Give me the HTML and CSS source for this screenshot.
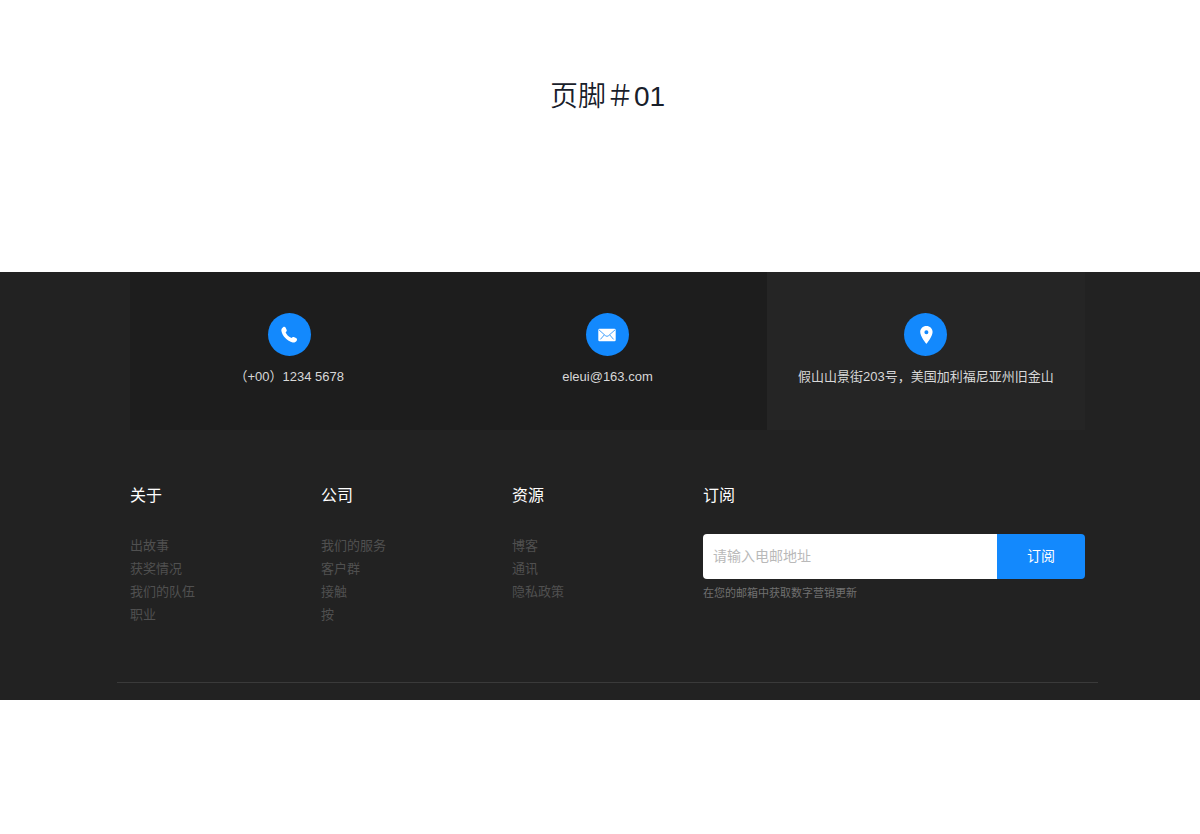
FILE: index.html
```html
<!DOCTYPE html>
<html lang="zh-CN">
<head>
<meta charset="utf-8">
<meta name="viewport" content="width=device-width, initial-scale=1">
<title>页脚＃01</title>
<link rel="stylesheet" href="styles.css">
</head>
<body>
<header class="page-header">
  <h1 class="page-title">页脚＃01</h1>
</header>
<footer class="footer">
  <div class="container">
    <div class="contacts">
      <div class="contact">
        <span class="contact-icon">
          <svg viewBox="0 0 18 18" width="18" height="18" aria-hidden="true"><path fill="#fff" d="M3.1 1.2C4.1.5 5.3.9 5.8 1.9L6.7 4C7 5 6.5 5.6 5.6 6.2C6.5 8.6 8.8 10.9 11.6 12.1C12.2 11.2 12.9 10.8 13.8 11.1L16 12.1C17 12.6 17.4 13.7 16.7 14.7C15.8 16 14.3 16.8 12.7 16.4C7.2 15 2.3 10 1.4 5C1.1 3.4 1.9 2 3.1 1.2Z"/></svg>
        </span>
        <p class="contact-text">（+00）1234 5678</p>
      </div>
      <div class="contact">
        <span class="contact-icon">
          <svg viewBox="0 0 18 18" width="18" height="18" aria-hidden="true"><rect x=".3" y="2.8" width="17.4" height="12.4" rx="1.2" fill="#fff"/><path d="M.9 3.8L7.6 9.8Q9 10.9 10.4 9.8L17.1 3.8M2.4 13.4L6.2 9M15.6 13.4L11.8 9" fill="none" stroke="#1389fd" stroke-width=".8"/></svg>
        </span>
        <p class="contact-text">eleui@163.com</p>
      </div>
      <div class="contact contact-light">
        <span class="contact-icon">
          <svg viewBox="0 0 18 18" width="18" height="18" aria-hidden="true"><path fill="#fff" fill-rule="evenodd" d="M9.4 0C5.8 0 3.2 2.6 3.2 6.1C3.2 10.6 9.4 18 9.4 18S15.6 10.6 15.6 6.1C15.6 2.6 13 0 9.4 0ZM9.4 4.2A2 2 0 1 1 9.4 8.2A2 2 0 1 1 9.4 4.2Z"/></svg>
        </span>
        <p class="contact-text">假山山景街203号，美国加利福尼亚州旧金山</p>
      </div>
    </div>
    <div class="columns">
      <nav class="column" aria-labelledby="about">
        <h2 class="column-title" id="about">关于</h2>
        <ul class="links">
          <li><a href="#">出故事</a></li>
          <li><a href="#">获奖情况</a></li>
          <li><a href="#">我们的队伍</a></li>
          <li><a href="#">职业</a></li>
        </ul>
      </nav>
      <nav class="column" aria-labelledby="company">
        <h2 class="column-title" id="company">公司</h2>
        <ul class="links">
          <li><a href="#">我们的服务</a></li>
          <li><a href="#">客户群</a></li>
          <li><a href="#">接触</a></li>
          <li><a href="#">按</a></li>
        </ul>
      </nav>
      <nav class="column" aria-labelledby="resources">
        <h2 class="column-title" id="resources">资源</h2>
        <ul class="links">
          <li><a href="#">博客</a></li>
          <li><a href="#">通讯</a></li>
          <li><a href="#">隐私政策</a></li>
        </ul>
      </nav>
      <section class="column">
        <h2 class="column-title"><label for="email">订阅</label></h2>
        <form class="subscribe">
          <input class="subscribe-input" id="email" type="email" placeholder="请输入电邮地址">
          <button class="subscribe-button" type="button">订阅</button>
        </form>
        <p class="hint">在您的邮箱中获取数字营销更新</p>
      </section>
    </div>
    <hr class="divider">
  </div>
</footer>
</body>
</html>
```

FILE: styles.css
```css
* {
  box-sizing: border-box;
}

body {
  margin: 0;
  background: #fff;
  font-family: "Liberation Sans", "Noto Sans CJK SC", sans-serif;
  font-size: 13px;
  line-height: 23px;
}

h1, h2, p, ul {
  margin: 0;
  padding: 0;
}

.page-header {
  padding: 77px 0 155px 15px;
}

.page-title {
  color: #18202a;
  font-size: 28px;
  font-weight: 350;
  line-height: 40px;
  text-align: center;
}

.footer {
  padding: 0 0 17px 15px;
  background: #222;
}

.container {
  max-width: 981px;
  margin: 0 auto;
}

.contacts {
  display: grid;
  grid-template-columns: repeat(3, 1fr);
  margin: 0 13px;
  background: #1d1d1d;
}

.contact {
  display: flex;
  flex-direction: column;
  align-items: center;
  gap: 9px;
  padding: 41px 10px 42px;
}

.contact-light {
  background: #252525;
}

.contact-icon {
  display: flex;
  align-items: center;
  justify-content: center;
  width: 43px;
  height: 43px;
  border-radius: 50%;
  background: #1389fd;
}

.contact-text {
  color: #d8d8d8;
  text-align: center;
}

.columns {
  display: grid;
  grid-template-columns: 1fr 1fr 1fr 2fr;
  margin: 0 13px;
  padding: 53px 0 56px;
}

.column-title {
  margin-bottom: 26px;
  color: #fff;
  font-size: 16px;
  font-weight: 400;
  line-height: 25px;
}

.links {
  list-style: none;
}

.links a {
  color: #505050;
  text-decoration: none;
}

.subscribe {
  display: flex;
  height: 45px;
  overflow: hidden;
  border-radius: 4px;
}

.subscribe-input {
  flex: 1;
  min-width: 0;
  padding: 0 10px;
  border: 0;
  background: #fff;
  color: #222;
  font: inherit;
  font-size: 14px;
}

.subscribe-input::placeholder {
  color: #b9b9b9;
}

.subscribe-button {
  width: 88px;
  padding: 0;
  border: 0;
  background: #1389fd;
  color: #fff;
  font: inherit;
  font-size: 14px;
}

.hint {
  margin-top: 3px;
  color: #707070;
  font-size: 11px;
}

.divider {
  height: 1px;
  margin: 0;
  border: 0;
  background: #3a3a3a;
}
```
